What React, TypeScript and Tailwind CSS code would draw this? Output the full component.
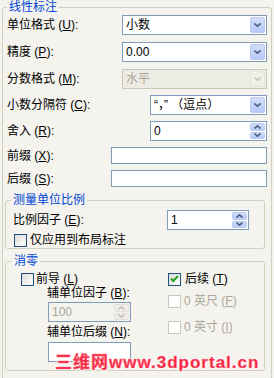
import React from "react";

const font = "font-['Liberation_Sans','Noto_Sans_CJK_SC',sans-serif]";

function Chevron({ up, color }: { up?: boolean; color: string }) {
  return (
    <svg width="7" height="4" viewBox="0 0 7 4" className={up ? "rotate-180" : ""}>
      <path d="M0.5 0.5 L3.5 3.2 L6.5 0.5" fill="none" stroke={color} strokeWidth="1.6" />
    </svg>
  );
}

function DropButton({ disabled }: { disabled?: boolean }) {
  return (
    <div
      className={`flex w-[15px] h-full items-center justify-center rounded-[2px] border ${
        disabled
          ? "border-[#e6e4d9] bg-[#f0efe8]"
          : "border-[#b9cbf3] bg-gradient-to-b from-[#d3defa] to-[#b6c9f6]"
      }`}
    >
      <Chevron color={disabled ? "#c8c6bc" : "#4d6185"} />
    </div>
  );
}

function Select({ value, width, disabled }: { value: string; width: string; disabled?: boolean }) {
  return (
    <div
      className={`flex h-[20px] ${width} items-center border p-[1px] ${
        disabled ? "border-[#cac8bb] bg-[#ecebe4] text-[#aca899]" : "border-[#7f9db9] bg-white"
      }`}
    >
      <span className="flex-1 pl-[2px] text-[12px] leading-[14px] whitespace-nowrap">{value}</span>
      <DropButton disabled={disabled} />
    </div>
  );
}

function Spin({ value, width, disabled }: { value: string; width: string; disabled?: boolean }) {
  const btn = disabled
    ? "border-[#e2e0d6] bg-[#efeee8]"
    : "border-[#b9cbf3] bg-gradient-to-b from-[#d3defa] to-[#b6c9f6]";
  const c = disabled ? "#c8c6bc" : "#4d6185";
  return (
    <div
      className={`flex h-[20px] ${width} items-center border border-[#7f9db9] p-[1px] ${
        disabled ? "bg-[#f4f3ee] text-[#aca899]" : "bg-white"
      }`}
    >
      <span className="flex-1 pl-[2px] text-[12px] leading-[14px]">{value}</span>
      <div className="flex h-full w-[15px] flex-col gap-[1px]">
        <div className={`flex flex-1 items-center justify-center rounded-[2px] border ${btn}`}>
          <Chevron up color={c} />
        </div>
        <div className={`flex flex-1 items-center justify-center rounded-[2px] border ${btn}`}>
          <Chevron color={c} />
        </div>
      </div>
    </div>
  );
}

function Input({ width, height, disabled }: { width: string; height: string; disabled?: boolean }) {
  return <div className={`${width} ${height} border border-[#7f9db9] ${disabled ? "bg-[#f4f3ee]" : "bg-white"}`} />;
}

function Check({ checked, disabled }: { checked?: boolean; disabled?: boolean }) {
  return (
    <div
      className={`flex h-[13px] w-[13px] shrink-0 items-center justify-center border ${
        disabled
          ? "border-[#cac8bb] bg-white"
          : "border-[#1c5180] bg-gradient-to-br from-[#dcdcd7] to-white"
      }`}
    >
      {checked && (
        <svg width="9" height="8" viewBox="0 0 9 8">
          <path d="M1 3.5 L3.3 6 L8 1" fill="none" stroke="#21a121" strokeWidth="2" />
        </svg>
      )}
    </div>
  );
}

function Key({ k }: { k: string }) {
  return (
    <>
      {" "}(<span className="underline">{k}</span>)
    </>
  );
}

function Label({ text, k, colon = true }: { text: string; k: string; colon?: boolean }) {
  return (
    <span className="block text-[12px] leading-[14px] whitespace-nowrap">
      {text}
      <Key k={k} />
      {colon ? ":" : ""}
    </span>
  );
}

function Row({ children, mt }: { children: React.ReactNode; mt: string }) {
  return <div className={`flex items-center justify-between ${mt}`}>{children}</div>;
}

export default function App() {
  return (
    <div className={`relative h-[378px] w-[274px] overflow-hidden bg-[#f4f3ee] text-black ${font}`}>
      <fieldset className="ml-[2px] h-[420px] w-[270px] rounded-[3px] border border-[#d0d0bf] px-[4px]">
        <legend className="px-[2px] text-[12px] leading-[14px] text-[#0046d5]">线性标注</legend>

        <Row mt="mt-[1px]">
          <Label text="单位格式" k="U" />
          <Select value="小数" width="w-[145px]" />
        </Row>
        <Row mt="mt-[7px]">
          <Label text="精度" k="P" />
          <Select value="0.00" width="w-[145px]" />
        </Row>
        <Row mt="mt-[7px]">
          <Label text="分数格式" k="M" />
          <Select value="水平" width="w-[145px]" disabled />
        </Row>
        <Row mt="mt-[6px]">
          <Label text="小数分隔符" k="C" />
          <Select value="“，” （逗点）" width="w-[117px]" />
        </Row>
        <Row mt="mt-[6px]">
          <Label text="舍入" k="R" />
          <Spin value="0" width="w-[117px]" />
        </Row>
        <Row mt="mt-[6px]">
          <Label text="前缀" k="X" />
          <Input width="w-[156px]" height="h-[17px]" />
        </Row>
        <Row mt="mt-[6px]">
          <Label text="后缀" k="S" />
          <Input width="w-[156px]" height="h-[17px]" />
        </Row>

        <fieldset className="ml-[-2px] mt-[6px] h-[56px] w-[260px] rounded-[3px] border border-[#d0d0bf] pl-[7px] pr-[15px]">
          <legend className="ml-[-2px] px-[2px] text-[12px] leading-[14px] text-[#0046d5]">测量单位比例</legend>
          <div className="mt-[3px] flex items-center justify-between">
            <Label text="比例因子" k="E" />
            <Spin value="1" width="w-[82px]" />
          </div>
          <div className="mt-[3px] flex items-center gap-[3px] pl-[1px]">
            <Check />
            <span className="text-[12px] leading-[14px]">仅应用到布局标注</span>
          </div>
        </fieldset>

        <fieldset className="ml-[-2px] mt-[5px] h-[117px] w-[260px] rounded-[3px] border border-[#d0d0bf] pl-[15px]">
          <legend className="ml-[-9px] px-[2px] text-[12px] leading-[14px] text-[#0046d5]">消零</legend>
          <div className="flex">
            <div className="flex w-[147px] flex-col">
              <div className="mt-[4px] flex items-center gap-[2px]">
                <Check />
                <Label text="前导" k="L" colon={false} />
              </div>
              <div className="pl-[26px]">
                <Label text="辅单位因子" k="B" />
              </div>
              <div className="mt-[2px] flex pl-[27px]">
                <Spin value="100" width="w-[83px]" disabled />
              </div>
              <div className="mt-[3px] pl-[26px]">
                <Label text="辅单位后缀" k="N" />
              </div>
              <div className="mt-[3px] flex pl-[27px]">
                <Input width="w-[83px]" height="h-[20px]" />
              </div>
            </div>
            <div className="flex flex-col">
              <div className="mt-[4px] flex items-center gap-[4px]">
                <Check checked />
                <Label text="后续" k="T" colon={false} />
              </div>
              <div className="mt-[8px] flex items-center gap-[3px] text-[#aca899]">
                <Check disabled />
                <span className="text-[12px] leading-[14px] whitespace-nowrap">
                  0 英尺<Key k="F" />
                </span>
              </div>
              <div className="mt-[12px] flex items-center gap-[3px] text-[#aca899]">
                <Check disabled />
                <span className="text-[12px] leading-[14px] whitespace-nowrap">
                  0 英寸<Key k="I" />
                </span>
              </div>
            </div>
          </div>
        </fieldset>
      </fieldset>

      <div className="absolute left-[55px] top-[354px] flex items-baseline font-['Liberation_Sans','Noto_Sans_CJK_SC',sans-serif] text-[17px] font-bold leading-[18px] tracking-[1px] text-[#f0203c] [-webkit-text-stroke:0.6px_#ff7080] [text-shadow:1px_1px_0_#fff,-1px_-1px_0_#fff,1px_-1px_0_#fff,-1px_1px_0_#fff]">
        <span>三维网</span>
        <span>www.3dportal.cn</span>
      </div>
    </div>
  );
}
